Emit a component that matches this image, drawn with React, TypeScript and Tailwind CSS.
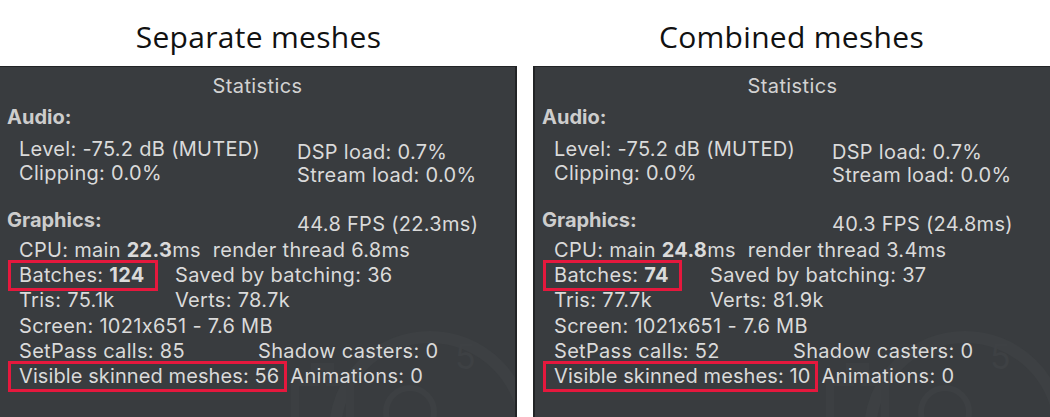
import React from "react";

type Data = {
  title: string;
  fps: string;
  cpuMain: string;
  render: string;
  batches: string;
  saved: string;
  tris: string;
  verts: string;
  setpass: string;
  skinned: string;
};

const left: Data = {
  title: "Separate meshes",
  fps: "44.8 FPS (22.3ms)",
  cpuMain: "22.3",
  render: "6.8ms",
  batches: "124",
  saved: "36",
  tris: "75.1k",
  verts: "78.7k",
  setpass: "85",
  skinned: "56",
};

const right: Data = {
  title: "Combined meshes",
  fps: "40.3 FPS (24.8ms)",
  cpuMain: "24.8",
  render: "3.4ms",
  batches: "74",
  saved: "37",
  tris: "77.7k",
  verts: "81.9k",
  setpass: "52",
  skinned: "10",
};

function Watermark() {
  return (
    <svg
      className="absolute right-0 bottom-0 pointer-events-none"
      width="300"
      height="110"
      viewBox="0 0 300 110"
      fill="none"
    >
      <circle cx="215" cy="125" r="95" stroke="#3d4043" strokeWidth="12" />
      <circle cx="195" cy="105" r="24" stroke="#3d4043" strokeWidth="6" />
      <text x="240" y="62" fill="#3e4144" fontSize="34" fontFamily="Inter, sans-serif">
        5
      </text>
      <path
        d="M80 110 L80 75 L100 75 L100 60 L115 60 L115 75 L135 75 L135 110"
        stroke="#3c3f42"
        strokeWidth="8"
      />
    </svg>
  );
}

function Panel({ d, side }: { d: Data; side: "l" | "r" }) {
  const box = "ring-[3px] ring-[#e5183d]";
  return (
    <div className="flex flex-col w-[517px] shrink-0">
      <div className="h-[66px] pt-[6px] flex items-center justify-center text-[30px] text-[#111] font-['Open_Sans',sans-serif] tracking-[0.3px]">
        {d.title}
      </div>
      <div
        className={
          "relative flex-1 overflow-hidden bg-[#393c3f] border-t border-[#222426] text-[#dadada] text-[20px] tracking-[0.3px] font-['Inter',sans-serif] [font-feature-settings:'calt'_0] " +
          (side === "l" ? "border-r-2" : "border-l-2")
        }
      >
        <Watermark />
        <div className="relative flex flex-col">
          <div className="h-[37px] flex items-center justify-center text-[20px] tracking-[0.4px] text-[#d2d2d2]">
            Statistics
          </div>
          <div className="h-[25px] leading-[25px] pt-[1px] pl-[7px] font-bold text-[#cdcdcd] tracking-[0px]">
            Audio:
          </div>
          <div className="flex pl-[19px] pt-[8px]">
            <div className="w-[278px] flex flex-col leading-[24px]">
              <div>Level: -75.2 dB (MUTED)</div>
              <div>Clipping: 0.0%</div>
            </div>
            <div className="flex flex-col leading-[23px] pt-[4px]">
              <div>DSP load: 0.7%</div>
              <div>Stream load: 0.0%</div>
            </div>
          </div>
          <div className="flex pt-[21px] leading-[25px]">
            <div className="w-[297px] pl-[7px] font-bold text-[#cdcdcd] tracking-[0px]">Graphics:</div>
            <div className="pt-[4px]">{d.fps}</div>
          </div>
          <div className="flex flex-col leading-[25.2px] pt-[1px] pl-[19px]">
            <div className="whitespace-pre">
              CPU: main <b>{d.cpuMain}</b>ms  render thread {d.render}
            </div>
            <div className="flex">
              <div className="w-[156px]">
                <span className={"inline-block -ml-[8px] pl-[8px] pr-[10px] " + box}>
                  Batches: <b>{d.batches}</b>
                </span>
              </div>
              <div>Saved by batching: {d.saved}</div>
            </div>
            <div className="flex">
              <div className="w-[156px]">Tris: {d.tris}</div>
              <div>Verts: {d.verts}</div>
            </div>
            <div>Screen: 1021x651 - 7.6 MB</div>
            <div className="flex">
              <div className="w-[239px]">SetPass calls: {d.setpass}</div>
              <div>Shadow casters: 0</div>
            </div>
            <div className="flex items-center">
              <span className={"inline-block -ml-[8px] pl-[8px] pr-[5px] tracking-[0.1px] " + box}>
                Visible skinned meshes: {d.skinned}
              </span>
              <span className="ml-[6px]">Animations: 0</span>
            </div>
          </div>
        </div>
      </div>
    </div>
  );
}

export default function App() {
  return (
    <div className="w-[1050px] h-[417px] bg-white flex gap-[16px] overflow-hidden">
      <Panel d={left} side="l" />
      <Panel d={right} side="r" />
    </div>
  );
}
